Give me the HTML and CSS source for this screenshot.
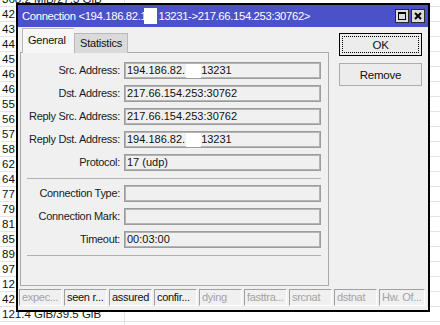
FILE: index.html
```html
<!DOCTYPE html>
<html>
<head>
<meta charset="utf-8">
<link rel="stylesheet" href="styles.css">
</head>
<body>
<div class="list">
  <div class="row"><div class="c1">368.2 MiB/27.3 GiB</div><div class="c2"></div></div>
  <div class="row"><div class="c1">42</div><div class="c2"></div></div>
  <div class="row"><div class="c1">43</div><div class="c2"></div></div>
  <div class="row"><div class="c1">44</div><div class="c2"></div></div>
  <div class="row"><div class="c1">45</div><div class="c2"></div></div>
  <div class="row"><div class="c1">46</div><div class="c2"></div></div>
  <div class="row"><div class="c1">46</div><div class="c2"></div></div>
  <div class="row"><div class="c1">55</div><div class="c2"></div></div>
  <div class="row"><div class="c1">56</div><div class="c2"></div></div>
  <div class="row"><div class="c1">57</div><div class="c2"></div></div>
  <div class="row"><div class="c1">58</div><div class="c2"></div></div>
  <div class="row"><div class="c1">62</div><div class="c2"></div></div>
  <div class="row"><div class="c1">64</div><div class="c2"></div></div>
  <div class="row"><div class="c1">77</div><div class="c2"></div></div>
  <div class="row"><div class="c1">79</div><div class="c2"></div></div>
  <div class="row"><div class="c1">81</div><div class="c2"></div></div>
  <div class="row"><div class="c1">85</div><div class="c2"></div></div>
  <div class="row"><div class="c1">89</div><div class="c2"></div></div>
  <div class="row"><div class="c1">97</div><div class="c2"></div></div>
  <div class="row"><div class="c1">12</div><div class="c2"></div></div>
  <div class="row"><div class="c1">42</div><div class="c2"></div></div>
  <div class="row"><div class="c1">121.4 GiB/39.5 GiB</div><div class="c2"></div></div>
  <div class="row"><div class="c1"></div><div class="c2"></div></div>
</div>

<div class="window">
  <div class="titlebar">
    <span class="title">Connection &lt;194.186.82.1<span class="tredact"></span>13231-&gt;217.66.154.253:30762&gt;</span>
    <div class="tbtns">
      <div class="tbtn"><span class="maxicon"></span></div>
      <div class="tbtn">
        <svg width="8" height="8" viewBox="0 0 8 8"><path d="M1 1 L7 7 M7 1 L1 7" stroke="#000" stroke-width="2" fill="none"/></svg>
      </div>
    </div>
  </div>
  <div class="body">
    <div class="main">
      <div class="left">
        <div class="tabs">
          <div class="tab active">General</div>
          <div class="tab stat">Statistics</div>
        </div>
        <div class="panel">
          <div class="form">
            <div class="lbl">Src. Address:</div>
            <div class="field">194.186.82.<span class="redact"></span>13231</div>
            <div class="lbl">Dst. Address:</div>
            <div class="field">217.66.154.253:30762</div>
            <div class="lbl">Reply Src. Address:</div>
            <div class="field">217.66.154.253:30762</div>
            <div class="lbl">Reply Dst. Address:</div>
            <div class="field">194.186.82.<span class="redact"></span>13231</div>
            <div class="lbl">Protocol:</div>
            <div class="field">17 (udp)</div>
            <div class="sep"></div>
            <div class="lbl">Connection Type:</div>
            <div class="field"></div>
            <div class="lbl">Connection Mark:</div>
            <div class="field"></div>
            <div class="lbl">Timeout:</div>
            <div class="field">00:03:00</div>
            <div class="sep"></div>
          </div>
        </div>
      </div>
      <div class="right">
        <div class="btn ok"><span class="focus">OK</span></div>
        <div class="btn">Remove</div>
      </div>
    </div>
    <div class="status">
      <div class="st dis">expec...</div>
      <div class="st">seen r...</div>
      <div class="st">assured</div>
      <div class="st">confir...</div>
      <div class="st dis">dying</div>
      <div class="st dis">fasttra...</div>
      <div class="st dis">srcnat</div>
      <div class="st dis">dstnat</div>
      <div class="st dis last">Hw. Of...</div>
    </div>
  </div>
</div>
</body>
</html>
```
FILE: styles.css
```css
html, body {
  margin: 0;
  padding: 0;
  background: #fff;
  overflow: hidden;
}
body {
  width: 440px;
  height: 325px;
  position: relative;
  font-family: "Liberation Sans", Arial, sans-serif;
  font-size: 11px;
  color: #111;
}
.list {
  margin-top: -8px;
}
.row {
  display: grid;
  grid-template-columns: 125px 1fr;
  height: 15px;
  box-sizing: border-box;
  border-bottom: 1px solid #e3e3e3;
}
.c1 {
  border-right: 1px solid #e3e3e3;
  padding-left: 2px;
  line-height: 14px;
  font-size: 11.5px;
  white-space: nowrap;
  overflow: hidden;
}
.window {
  position: absolute;
  left: 16px;
  top: 3px;
  width: 414px;
  height: 309px;
  box-sizing: border-box;
  border: 2px solid #000;
  display: flex;
  flex-direction: column;
  background: #f0f0f0;
}
.titlebar {
  height: 22px;
  flex: none;
  background: #4b51c9;
  color: #fff;
  display: flex;
  align-items: center;
  padding-left: 4px;
  font-size: 11.3px;
  letter-spacing: -0.35px;
}
.title {
  white-space: nowrap;
  display: flex;
  align-items: center;
}
.tredact {
  display: inline-block;
  width: 13px;
  height: 16px;
  background: #fff;
  margin-left: -2px;
  margin-right: 1px;
}
.tbtns {
  margin-left: auto;
  display: flex;
  gap: 2px;
  padding-right: 3px;
}
.tbtn {
  width: 14px;
  height: 14px;
  box-sizing: border-box;
  border: 1px solid #2a2a2a;
  background: #dcdcdc;
  display: flex;
  align-items: center;
  justify-content: center;
}
.maxicon {
  width: 8px;
  height: 8px;
  box-sizing: border-box;
  border: 1px solid #000;
  border-top-width: 2px;
}
.body {
  flex: 1;
  display: flex;
  flex-direction: column;
}
.main {
  display: flex;
}
.left {
  width: 311px;
  padding-left: 2px;
  box-sizing: border-box;
  padding-top: 1px;
}
.tabs {
  display: flex;
  align-items: flex-end;
  padding-left: 2px;
  height: 25px;
  margin-bottom: -1px;
  position: relative;
  z-index: 1;
}
.tab {
  height: 20px;
  box-sizing: border-box;
  border: 1px solid #b9b9b9;
  border-bottom: none;
  background: #dadada;
  padding-left: 5px;
  line-height: 19px;
  letter-spacing: -0.2px;
  white-space: nowrap;
}
.tab.active {
  width: 52px;
  height: 25px;
  background: #f7f7f7;
  line-height: 23px;
  border-right: none;
}
.tab.stat {
  width: 54px;
}
.panel {
  height: 234px;
  box-sizing: border-box;
  border: 1px solid #a9a9a9;
  padding-top: 9px;
}
.form {
  display: grid;
  grid-template-columns: 99px 197px;
  column-gap: 4px;
  row-gap: 6px;
}
.lbl {
  text-align: right;
  line-height: 17px;
  letter-spacing: -0.3px;
  white-space: nowrap;
  color: #1a1a22;
}
.field {
  height: 17px;
  box-sizing: border-box;
  border: 1px solid #9c9c9c;
  box-shadow: inset 0 0 0 1px #b4b4b4;
  padding-left: 2px;
  line-height: 15px;
  white-space: nowrap;
  display: flex;
  align-items: center;
  letter-spacing: 0;
  color: #111;
}
.redact {
  display: inline-block;
  width: 15px;
  height: 14px;
  background: #fff;
  margin-left: 1px;
}
.sep {
  grid-column: 1 / -1;
  margin-left: 6px;
  margin-top: 1px;
  height: 0;
  border-top: 1px solid #b0b0b0;
}
.right {
  padding-left: 10px;
  padding-top: 6px;
  display: flex;
  flex-direction: column;
  gap: 7px;
}
.btn {
  width: 83px;
  height: 23px;
  box-sizing: border-box;
  border: 1px solid #adadad;
  background: #ececec;
  display: flex;
  align-items: center;
  justify-content: center;
  letter-spacing: -0.2px;
  font-size: 11.5px;
}
.btn.ok {
  border-color: #000;
  padding: 2px;
}
.focus {
  width: 100%;
  height: 100%;
  box-sizing: border-box;
  border: 1px dotted #000;
  display: flex;
  align-items: center;
  justify-content: center;
}
.status {
  display: flex;
  gap: 2px;
  margin-top: 3px;
  padding-left: 1px;
  padding-right: 3px;
}
.st {
  width: 43px;
  height: 17px;
  flex: none;
  box-sizing: border-box;
  border: 1px solid;
  border-color: #a0a0a0 #fff #fff #a0a0a0;
  padding-left: 2px;
  line-height: 15px;
  white-space: nowrap;
  overflow: hidden;
  letter-spacing: -0.3px;
  color: #111;
}
.st.dis {
  color: #a3a3a3;
}
.st.last {
  flex: 1;
}
```
